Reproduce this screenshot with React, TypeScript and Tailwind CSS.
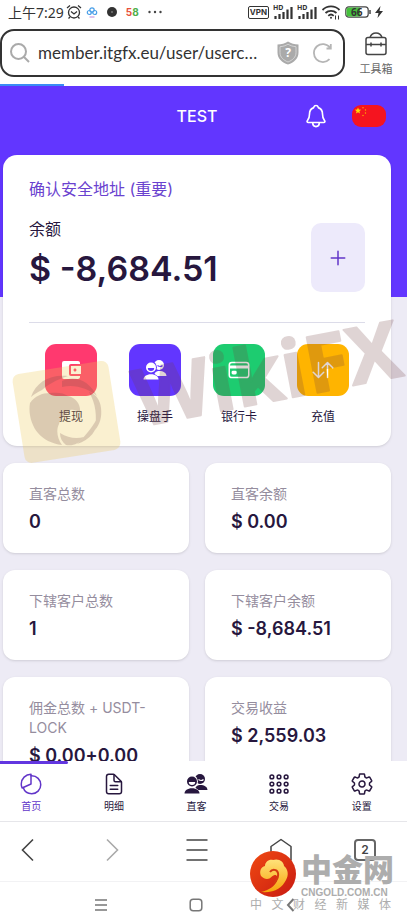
import React, { useState } from 'react';
import {
  IoAddOutline,
  IoAppsOutline,
  IoCardOutline,
  IoDocumentTextOutline,
  IoNotificationsOutline,
  IoPieChartOutline,
  IoSettingsOutline,
  IoSwapVerticalOutline,
} from 'react-icons/io5';
import { MdAccountBalanceWallet } from 'react-icons/md';

interface Stat {
  label: string;
  value: string;
}

interface Action {
  label: string;
  color: string;
  icon: React.ReactNode;
}

interface Tab {
  id: string;
  label: string;
  icon: React.ReactNode;
}

const PeopleIcon = ({ className = '', face }: { className?: string; face: string }) => (
  <svg className={className} viewBox="0 0 24 24" fill="currentColor">
    <circle cx="16" cy="7" r="5" />
    <path d="M11 19c0-4 2-6 5-6 4.500 0 7.500 2 7.500 5H14z" />
    <path d="M14.500 7.500q3 2 5 0" fill="none" stroke={face} strokeWidth="1.200" />
    <circle cx="8" cy="9.500" r="5.900" fill={face} />
    <circle cx="8" cy="9.500" r="5" />
    <path d="M0 22.500c0-4 3-7 8-7s8 3 8 7z" fill={face} />
    <path d="M.5 21.500c0-3 3-5.300 7.500-5.300s7.500 2.300 7.500 5.300z" />
    <path d="M4.800 10h6.400a3.200 3 0 0 1-6.400 0z" fill={face} />
  </svg>
);

const stats: Stat[] = [
  { label: '直客总数', value: '0' },
  { label: '直客余额', value: '$ 0.00' },
  { label: '下辖客户总数', value: '1' },
  { label: '下辖客户余额', value: '$ -8,684.51' },
  { label: '佣金总数 + USDT-LOCK', value: '$ 0.00+0.00' },
  { label: '交易收益', value: '$ 2,559.03' },
];

const actions: Action[] = [
  { label: '提现', color: 'bg-[#ff396f]', icon: <MdAccountBalanceWallet className="size-6" /> },
  { label: '操盘手', color: 'bg-[#6236ff]', icon: <PeopleIcon className="size-6" face="#6236ff" /> },
  { label: '银行卡', color: 'bg-[#1dcc70]', icon: <IoCardOutline className="size-6" /> },
  { label: '充值', color: 'bg-[#ffb400]', icon: <IoSwapVerticalOutline className="size-6" /> },
];

const tabs: Tab[] = [
  { id: 'home', label: '首页', icon: <IoPieChartOutline className="size-6" /> },
  { id: 'details', label: '明细', icon: <IoDocumentTextOutline className="size-6" /> },
  { id: 'clients', label: '直客', icon: <PeopleIcon className="size-6" face="#ffffff" /> },
  { id: 'trade', label: '交易', icon: <IoAppsOutline className="size-6" /> },
  { id: 'settings', label: '设置', icon: <IoSettingsOutline className="size-6" /> },
];

const Signal = () => (
  <svg className="h-4 w-5" viewBox="0 0 20 16">
    <text x="0" y="6" fontSize="7" fontWeight="700" fill="#333">HD</text>
    <path d="M2.500 15v-3M6.500 15V10M10.500 15V8M14.500 15V5.500M18.500 15V3" stroke="#333" strokeWidth="2.200" fill="none" />
  </svg>
);

const StatusBar = () => (
  <div className="flex h-6 shrink-0 items-center justify-between pl-2 pr-6 text-[#333]">
    <div className="flex items-center">
      <span className="text-[14px]">上午7:29</span>
      <svg className="ml-0.5 size-4" viewBox="0 0 16 16" fill="none" stroke="#333" strokeWidth="1.300">
        <circle cx="8" cy="8.500" r="5.500" />
        <path d="M5 7.500l3 2.500 3-2.500M1 4l3-2.500M15 4l-3-2.500M4 13l-1.500 1.500M12 13l1.500 1.500" />
      </svg>
      <svg className="ml-1 size-3" viewBox="0 0 12 12" fill="none" strokeWidth="1.200">
        <circle cx="6" cy="4" r="2.200" stroke="#4a9fe8" />
        <circle cx="3.300" cy="6.500" r="2" stroke="#4a9fe8" />
        <circle cx="8.700" cy="6.500" r="2" stroke="#4a9fe8" />
        <path d="M3.500 11h5" stroke="#c79be0" />
      </svg>
      <svg className="ml-2 size-3" viewBox="0 0 12 12">
        <circle cx="6" cy="6" r="5" fill="#333" />
        <circle cx="6" cy="6" r="1" fill="#777" />
      </svg>
      <span className="ml-2 font-['Inter'] text-[10px] font-bold">
        <span className="text-[#e8503c]">5</span>
        <span className="text-[#4fae4a]">8</span>
      </span>
      <svg className="ml-2 h-3 w-4" viewBox="0 0 16 12" fill="#444">
        <circle cx="2.500" cy="6" r="1.200" />
        <circle cx="8" cy="6" r="1.200" />
        <circle cx="13.500" cy="6" r="1.200" />
      </svg>
    </div>
    <div className="flex items-center gap-1">
      <span className="rounded-xs border border-[#333] px-px font-['Inter'] text-[8px] leading-[11px] font-bold">VPN</span>
      <Signal />
      <Signal />
      <svg className="h-4 w-5" viewBox="0 0 20 16" fill="none" stroke="#333" strokeWidth="1.800">
        <path d="M1.500 6a12 12 0 0 1 17 0M4.500 9a8 8 0 0 1 11 0M7.300 11.800a4 4 0 0 1 5.400 0" />
        <circle cx="10" cy="13.800" r="1" fill="#333" stroke="none" />
        <path d="M14.500 15.500v-4M17.500 11.500v4" strokeWidth="1" />
      </svg>
      <svg className="h-4 w-[26px]" viewBox="0 0 26 16">
        <rect x=".8" y="2.800" width="22.400" height="10.400" rx="3" fill="#fff" stroke="#444" strokeWidth="1.200" />
        <path d="M4 3.500h11v9H4a2.500 2.500 0 0 1-2.500-2.500V6A2.500 2.500 0 0 1 4 3.500z" fill="#45c13c" />
        <path d="M25 6v4" stroke="#444" strokeWidth="1.500" />
        <text x="6" y="11.800" fontSize="10" fontWeight="700" fill="#333">66</text>
      </svg>
      <svg className="h-3 w-2" viewBox="0 0 8 12" fill="#333">
        <path d="M5.500 0L0 7h3.500L2.500 12 8 5H4.500z" />
      </svg>
    </div>
  </div>
);

const AddressBar = () => (
  <div className="shrink-0">
    <div className="flex items-start pt-[5px] pb-[7px]">
      <div className="flex h-12 min-w-0 flex-1 items-center rounded-[14px] border-2 border-[#333] pl-2 pr-2.5">
        <svg className="size-5 shrink-0" viewBox="0 0 20 20" fill="none" stroke="#aaa" strokeWidth="2">
          <circle cx="8.500" cy="8.500" r="7.500" />
          <path d="M14 14l5 5" />
        </svg>
        <input
          type="text"
          aria-label="网址"
          defaultValue="member.itgfx.eu/user/userc…"
          className="ml-2 min-w-0 flex-1 bg-transparent font-['Lato'] text-[17px] text-[#333] outline-none"
        />
        <svg className="h-6 w-[22px] shrink-0" viewBox="0 0 22 24">
          <path d="M11 .5c3 2 6.500 3 10.500 3v8c0 6-4.500 10-10.500 12C5 21.500.5 17.500.5 11.500v-8c4 0 7.500-1 10.500-3z" fill="#aaa" />
          <path d="M11 3.200c2.500 1.500 5 2.300 8 2.500v6c0 4.500-3.500 7.500-8 9.300-4.500-1.800-8-4.800-8-9.300v-6c3-.2 5.500-1 8-2.500z" fill="none" stroke="#ddd" strokeWidth=".8" />
          <text x="11" y="16" textAnchor="middle" fontSize="12" fontWeight="700" fill="#fff">?</text>
        </svg>
        <button type="button" aria-label="刷新" className="ml-3.5">
          <svg className="size-5" viewBox="0 0 20 20" fill="none" stroke="#b5b5b5" strokeWidth="1.800">
            <path d="M16.500 16.200A9 9 0 1 1 17 4.500M17.800 1v4.500h-4.300" />
          </svg>
        </button>
      </div>
      <button type="button" className="flex w-[62px] flex-col items-center text-[11px] leading-4 text-[#666]">
        <svg className="mt-[3px] mb-[5px] h-6 w-[22px]" viewBox="0 0 22 24" fill="none" stroke="#444" strokeWidth="1.500">
          <rect x="1" y="5.500" width="20" height="17" rx="2" />
          <path d="M5 5.500C6 2.500 8 1 11 1s5 1.500 6 4.500M1 12.500h20M6 10.500v4M16 10.500v4" />
        </svg>
        工具箱
      </button>
    </div>
    <div className="h-0.5 w-16 bg-[#3b8cf5]" />
  </div>
);

const Flag = () => (
  <svg className="h-[22px] w-[34px]" viewBox="0 0 34 22">
    <rect width="34" height="22" rx="9" fill="#f5141f" />
    <path d="M6 2.500l.9 2.100 2.300.2-1.800 1.500.6 2.200L6 7.300 4 8.500l.6-2.200L2.800 4.800l2.300-.2z" fill="#ffde00" />
    <g fill="#ffb000">
      <circle cx="11" cy="2.800" r=".7" />
      <circle cx="13.500" cy="5" r=".7" />
      <circle cx="13.500" cy="8" r=".7" />
      <circle cx="11" cy="10.500" r=".7" />
    </g>
  </svg>
);

const WikiWatermark = () => (
  <svg
    className="pointer-events-none absolute top-[220px] left-0 h-[165px] w-[407px]"
    viewBox="0 0 407 165"
    aria-hidden="true"
  >
    <rect x="18" y="61" width="97" height="90" rx="7" fill="#ecc850" opacity=".27" transform="rotate(-9 66 106)" />
    {/* Eagle head inside the shutter blades */}
    <g fill="#704848" opacity=".22">
      <path d="M30 97C35 90 42 87 50 87C58 86 64 87 68 90C76 92 81 98 80 107C77 104 73 103 70 104C66 109 60 112 59 118C56 124 57 132 62 139C52 138 43 133 38 127C32 120 28 108 30 97z" />
      <path d="M31 91C36 76 50 68 68 70C56 74 47 79 42 84C38 86 34 88 31 91z" />
      <path d="M62 75C76 68 90 76 97 90C88 83 76 78 62 81z" />
      <path d="M89 86C96 88 100 94 101 102C102 111 100 118 95 124C97 110 96 98 89 86z" />
      <path d="M97 113C98 124 90 134 77 138C85 130 91 123 97 113z" />
      <path d="M84 131C79 138 73 140 66 139C62 136 60 132 60 127C68 132 76 133 84 131z" />
    </g>
    <text
      x="140"
      y="121"
      transform="rotate(-11 140 121)"
      fontFamily="Open Sans"
      fontSize="79"
      fontWeight="700"
      fill="#733f3f"
      stroke="#733f3f"
      strokeWidth="2"
      strokeLinejoin="round"
      opacity=".22"
    >
      WikiFX
    </text>
  </svg>
);

const BalanceCard = () => (
  <section className="rounded-[14px] bg-white px-[26px] pt-[22px] pb-[21px] shadow-sm">
    <a href="#address" className="block font-['Inter','Noto_Sans_CJK_SC',sans-serif] text-[16px] leading-6 text-[#6a42cf]">
      确认安全地址 (重要)
    </a>
    <div className="mt-4 flex items-start justify-between">
      <div>
        <p className="text-[16px] leading-6 text-[#27173e]">余额</p>
        <p className="mt-2 font-['Inter'] text-[34px] leading-10 font-semibold text-[#27173e]">$ -8,684.51</p>
      </div>
      <button
        type="button"
        aria-label="添加"
        className="mt-1.5 flex h-[69px] w-[54px] items-center justify-center rounded-[10px] bg-[#edeafb] text-[#6236c9]"
      >
        <IoAddOutline className="size-6" />
      </button>
    </div>
    <div className="mt-[30px] grid grid-cols-4 border-t border-[#dcdce9] pt-[21px]">
      {actions.map((action) => (
        <button key={action.label} type="button" className="flex flex-col items-center text-[12px] leading-4 text-[#27173e]">
          <span className={`mb-[13px] flex size-[52px] items-center justify-center rounded-[11px] text-white ${action.color}`}>
            {action.icon}
          </span>
          {action.label}
        </button>
      ))}
    </div>
  </section>
);

const StatCard = ({ label, value }: Stat) => (
  <div className="rounded-[12px] bg-white px-[26px] pt-[21px] pb-[17px] shadow-sm">
    <p className="font-['Inter','Noto_Sans_CJK_SC',sans-serif] text-[14px] leading-5 text-[#958d9e]">{label}</p>
    <p className="mt-1 font-['Inter'] text-[18px] leading-7 font-semibold whitespace-nowrap text-[#27173e]">{value}</p>
  </div>
);

const GoldWatermark = () => (
  <div className="pointer-events-none absolute right-4 bottom-3 w-[141px] text-[#adadad]">
    <div className="flex items-start">
      <svg className="size-[46px] shrink-0" viewBox="0 0 46 46">
        <defs>
          <linearGradient id="disc" x1="0" y1="0" x2="1" y2="1">
            <stop offset="0" stopColor="#f04a12" />
            <stop offset="1" stopColor="#c81a12" />
          </linearGradient>
          <linearGradient id="cloud" x1="0" y1="0" x2="0" y2="1">
            <stop offset="0" stopColor="#ffe27a" />
            <stop offset="1" stopColor="#f7a50c" />
          </linearGradient>
        </defs>
        <circle cx="23" cy="23" r="23" fill="url(#disc)" />
        <path
          d="M11 25c-2-5 0-9 4-10 0-4 4-7 8-6 6-2 11 2 11 6 4 3 5 9 2 14-4 8-11 13-25 12 8-2 14-6 16-11 1-4 0-6-2-6-3 0-4 4-8 4-2 0-4-1-6-3z"
          fill="url(#cloud)"
        />
        <path d="M20 21c2-3 7-3 8 1 1 4-1 7-4 10" fill="none" stroke="#d43a10" strokeWidth="2" />
      </svg>
      <div className="ml-[5px] flex flex-col">
        <span className="text-[31px] leading-9 font-black whitespace-nowrap">中金网</span>
        <span className="font-['Liberation_Sans'] text-[10px] leading-3 font-bold">CNGOLD.COM.CN</span>
      </div>
    </div>
    <div className="flex justify-between text-[12px] leading-3">
      {'中文财经新媒体'.split('').map((char) => (
        <span key={char}>{char}</span>
      ))}
    </div>
  </div>
);

const BrowserBar = () => (
  <div className="-ml-[13px] grid h-[60px] grid-cols-5 items-center justify-items-center border-t border-[#e6e6ea] pb-[3px] text-[#444]">
    <button type="button" aria-label="后退">
      <svg className="size-6" viewBox="0 0 24 24" fill="none" stroke="currentColor" strokeWidth="1.600">
        <path d="M16 1.500L5.500 12 16 22.500" />
      </svg>
    </button>
    <button type="button" aria-label="前进" className="text-[#aaa]">
      <svg className="size-6" viewBox="0 0 24 24" fill="none" stroke="currentColor" strokeWidth="1.600">
        <path d="M6 1.500L16.500 12 6 22.500" />
      </svg>
    </button>
    <button type="button" aria-label="菜单">
      <svg className="size-6" viewBox="0 0 24 24" fill="none" stroke="currentColor" strokeWidth="1.600">
        <path d="M1.500 2h21M1.500 12h21M1.500 22h21" />
      </svg>
    </button>
    <button type="button" aria-label="主页">
      <svg className="size-6" viewBox="0 0 24 24" fill="none" stroke="currentColor" strokeWidth="1.500">
        <path d="M12 1.500L22 8.500V22H2V8.500z" strokeLinejoin="round" />
      </svg>
    </button>
    <button
      type="button"
      aria-label="标签页"
      className="flex size-[22px] items-center justify-center rounded-sm border-2 border-[#666] font-['Inter'] text-[12px] leading-none font-semibold"
    >
      2
    </button>
  </div>
);

const SystemBar = () => (
  <div className="grid h-[42px] grid-cols-3 items-center justify-items-center border-t border-[#f2f2f4] pt-1 pr-[69px] pl-[54px] text-[#777]">
    <svg className="size-3.5" viewBox="0 0 14 14" fill="none" stroke="currentColor" strokeWidth="1.300">
      <path d="M1 2h12M1 7h12M1 12h12" />
    </svg>
    <svg className="size-3.5" viewBox="0 0 14 14" fill="none" stroke="currentColor" strokeWidth="1.500">
      <rect x="1.200" y="1.200" width="11.600" height="11.600" rx="3" />
    </svg>
    <svg className="size-3.5" viewBox="0 0 14 14" fill="none" stroke="currentColor" strokeWidth="2">
      <path d="M9.500 1L4 7l5.500 6" />
    </svg>
  </div>
);

export default function App() {
  const [activeTab, setActiveTab] = useState('home');

  return (
    <div className="relative flex h-screen flex-col overflow-hidden bg-white font-['Noto_Sans','Noto_Sans_CJK_SC',sans-serif]">
      <StatusBar />
      <AddressBar />

      {/* Page content */}
      <main className="relative min-h-0 flex-1 overflow-hidden bg-[#edebf5]">
        <header className="h-[211px] bg-[#6236ff] pr-[21px] pl-2">
          <div className="grid grid-cols-[1fr_auto_1fr] items-center pt-[17px]">
            <h1 className="col-start-2 font-['Inter'] text-[16px] font-medium text-white">TEST</h1>
            <div className="flex items-center justify-end gap-[23px]">
              <button type="button" aria-label="通知" className="text-white">
                <IoNotificationsOutline className="size-[26px]" />
              </button>
              <button type="button" aria-label="语言">
                <Flag />
              </button>
            </div>
          </div>
        </header>
        <div className="-mt-[142px] flex flex-col gap-[17px] pr-4 pl-[3px]">
          <BalanceCard />
          <div className="grid grid-cols-2 gap-x-4 gap-y-[17px]">
            {stats.map((stat) => (
              <StatCard key={stat.label} {...stat} />
            ))}
          </div>
        </div>
        <WikiWatermark />
      </main>

      {/* Bottom menu */}
      <nav className="-ml-[10px] mr-1 grid h-[60px] shrink-0 grid-cols-5">
        {tabs.map((tab) => (
          <button
            key={tab.id}
            type="button"
            onClick={() => setActiveTab(tab.id)}
            className={`flex flex-col items-center text-[10px] leading-4 ${
              activeTab === tab.id ? 'text-[#6236c9]' : 'text-[#27173e]'
            }`}
          >
            <span className={`mb-2 h-[3px] w-[78px] self-start rounded-r-full ${activeTab === tab.id ? 'bg-[#6236e0]' : ''}`} />
            {tab.icon}
            <span className="mt-0.5">{tab.label}</span>
          </button>
        ))}
      </nav>
      <div className="shrink-0">
        <BrowserBar />
        <SystemBar />
      </div>
      <GoldWatermark />
    </div>
  );
}
